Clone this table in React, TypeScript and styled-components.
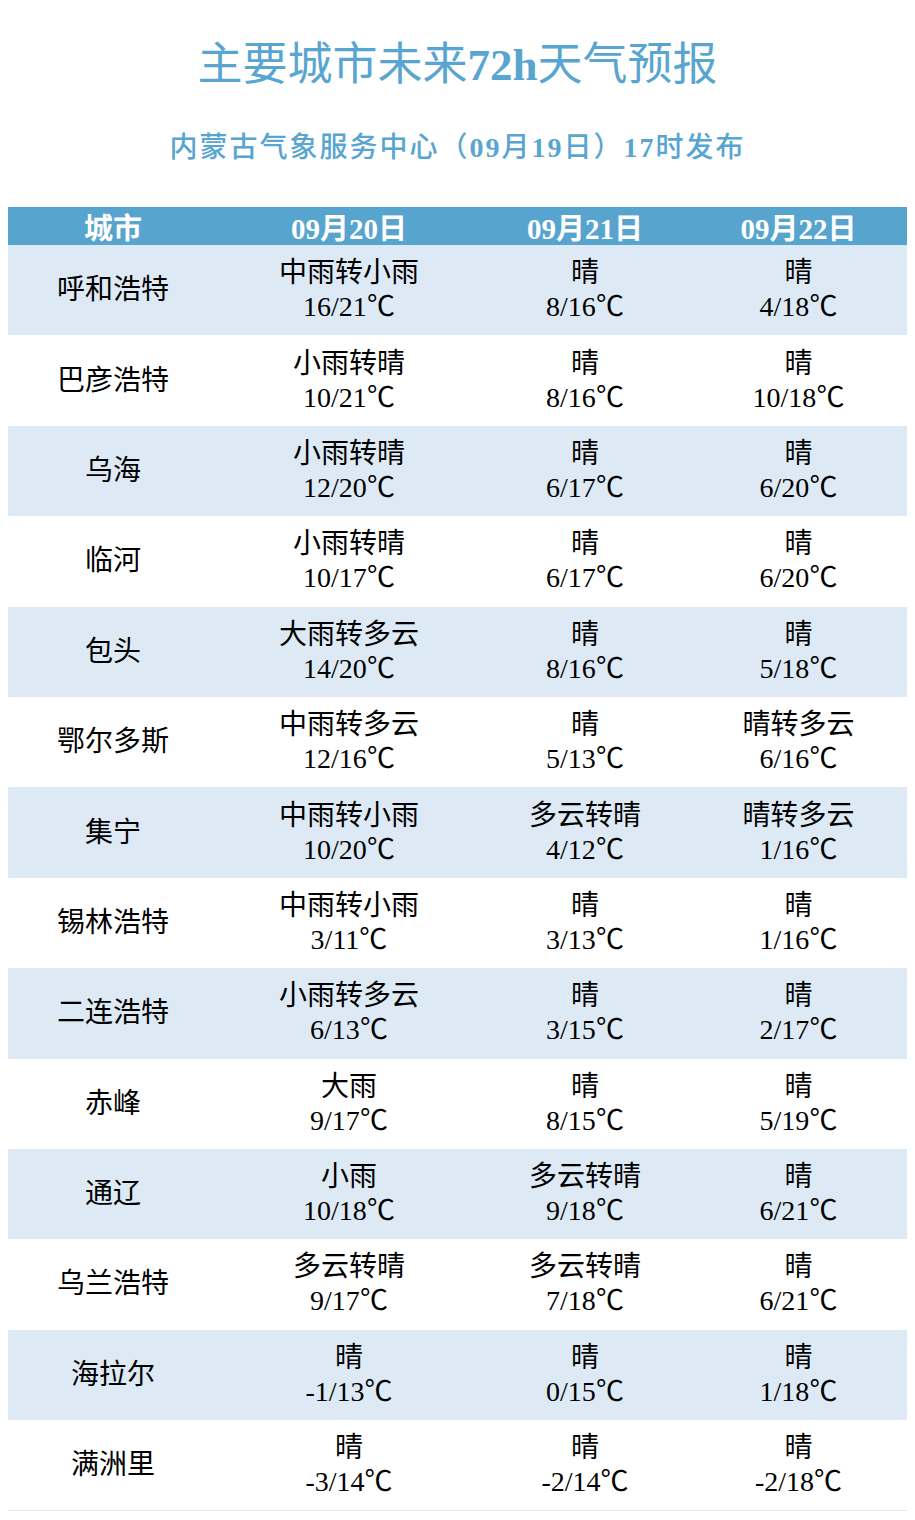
import React, { FC } from 'react';
import styled, { createGlobalStyle } from 'styled-components';

const GlobalStyle = createGlobalStyle`
  body {
    margin: 0;
    background: #ffffff;
    font-family: "Liberation Serif", "Noto Sans CJK SC", serif;
  }
`;

const Page = styled.div`
  width: 915px;
  padding: 40px 8px 0;
  box-sizing: border-box;
`;

const Title = styled.h1`
  margin: 0;
  text-align: center;
  font-size: 45px;
  line-height: 50px;
  font-weight: normal;
  color: #59a5d1;
`;

const Subtitle = styled.h2`
  margin: 43px 0 0;
  text-align: center;
  font-size: 28px;
  line-height: 30px;
  letter-spacing: 2px;
  font-weight: 500;
  color: #59a5d1;
`;

const Num = styled.b`
  font-weight: bold;
`;

const Table = styled.div`
  margin-top: 44px;
  display: grid;
  grid-template-columns: 210px 262px 210px 217px;
  border-bottom: 1px solid #e3e9e9;
`;

const HeadCell = styled.div`
  height: 38px;
  background: #57a4cf;
  color: #ffffff;
  font-size: 29px;
  font-weight: bold;
  display: flex;
  align-items: center;
  justify-content: center;
`;

const Cell = styled.div<{ $shade: boolean }>`
  height: 90.4px;
  background: ${(p) => (p.$shade ? '#ddeaf5' : '#ffffff')};
  color: #000000;
  font-size: 28px;
  line-height: 34px;
  display: flex;
  flex-direction: column;
  align-items: center;
  justify-content: center;
  text-align: center;
`;

interface Forecast {
  weather: string;
  temp: string;
}

interface Row {
  city: string;
  days: Forecast[];
}

const f = (weather: string, temp: string): Forecast => ({ weather, temp });

const rows: Row[] = [
  { city: '呼和浩特', days: [f('中雨转小雨', '16/21'), f('晴', '8/16'), f('晴', '4/18')] },
  { city: '巴彦浩特', days: [f('小雨转晴', '10/21'), f('晴', '8/16'), f('晴', '10/18')] },
  { city: '乌海', days: [f('小雨转晴', '12/20'), f('晴', '6/17'), f('晴', '6/20')] },
  { city: '临河', days: [f('小雨转晴', '10/17'), f('晴', '6/17'), f('晴', '6/20')] },
  { city: '包头', days: [f('大雨转多云', '14/20'), f('晴', '8/16'), f('晴', '5/18')] },
  { city: '鄂尔多斯', days: [f('中雨转多云', '12/16'), f('晴', '5/13'), f('晴转多云', '6/16')] },
  { city: '集宁', days: [f('中雨转小雨', '10/20'), f('多云转晴', '4/12'), f('晴转多云', '1/16')] },
  { city: '锡林浩特', days: [f('中雨转小雨', '3/11'), f('晴', '3/13'), f('晴', '1/16')] },
  { city: '二连浩特', days: [f('小雨转多云', '6/13'), f('晴', '3/15'), f('晴', '2/17')] },
  { city: '赤峰', days: [f('大雨', '9/17'), f('晴', '8/15'), f('晴', '5/19')] },
  { city: '通辽', days: [f('小雨', '10/18'), f('多云转晴', '9/18'), f('晴', '6/21')] },
  { city: '乌兰浩特', days: [f('多云转晴', '9/17'), f('多云转晴', '7/18'), f('晴', '6/21')] },
  { city: '海拉尔', days: [f('晴', '-1/13'), f('晴', '0/15'), f('晴', '1/18')] },
  { city: '满洲里', days: [f('晴', '-3/14'), f('晴', '-2/14'), f('晴', '-2/18')] },
];

const dates = ['09月20日', '09月21日', '09月22日'];

export const App: FC = () => (
  <Page>
    <GlobalStyle />
    <Title>
      主要城市未来<Num>72h</Num>天气预报
    </Title>
    <Subtitle>
      内蒙古气象服务中心（<Num>09</Num>月<Num>19</Num>日）<Num>17</Num>时发布
    </Subtitle>
    <Table>
      <HeadCell>城市</HeadCell>
      {dates.map((d) => (
        <HeadCell key={d}>{d}</HeadCell>
      ))}
      {rows.map((row, i) => (
        <React.Fragment key={row.city}>
          <Cell $shade={i % 2 === 0}>{row.city}</Cell>
          {row.days.map((day, j) => (
            <Cell key={`${row.city}-${j}`} $shade={i % 2 === 0}>
              <span>{day.weather}</span>
              <span>{day.temp}℃</span>
            </Cell>
          ))}
        </React.Fragment>
      ))}
    </Table>
  </Page>
);

export default App;
